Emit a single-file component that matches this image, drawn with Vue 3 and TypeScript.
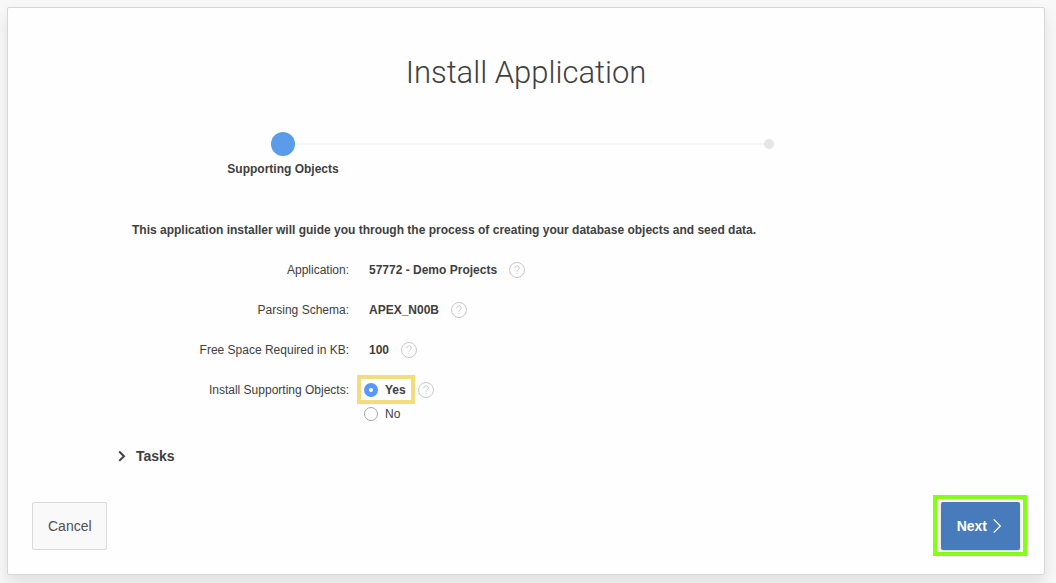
<script setup lang="ts">
import { ref } from 'vue'

interface Detail {
  label: string
  value: string
}

const details: Detail[] = [
  { label: 'Application:', value: '57772 - Demo Projects' },
  { label: 'Parsing Schema:', value: 'APEX_N00B' },
  { label: 'Free Space Required in KB:', value: '100' },
]

const install = ref<'yes' | 'no'>('yes')
const tasksOpen = ref(false)
</script>

<template>
  <main class="wizard">
    <h1 class="title">Install Application</h1>

    <ol class="steps">
      <li class="step current" aria-current="step">
        <span class="marker"><span class="dot"></span></span>
        <span class="step-label">Supporting Objects</span>
      </li>
      <li class="step">
        <span class="marker"><span class="dot"></span></span>
      </li>
    </ol>

    <form class="form" @submit.prevent>
      <p class="intro">
        This application installer will guide you through the process of creating your database objects and seed data.
      </p>

      <div v-for="item in details" :key="item.label" class="row">
        <span class="label">{{ item.label }}</span>
        <div class="field">
          <strong class="value">{{ item.value }}</strong>
          <button type="button" class="help" :aria-label="'Help: ' + item.label">
            <svg viewBox="0 0 16 16" width="16" height="16" aria-hidden="true">
              <circle cx="8" cy="8" r="7.5" />
              <path d="M5.700 6.200c0-1.400 1-2.300 2.300-2.300s2.300.9 2.300 2.100c0 1.600-2.300 1.800-2.300 3.700" />
              <path d="M8 11v1.200" />
            </svg>
          </button>
        </div>
      </div>

      <div class="row options" role="radiogroup" aria-labelledby="install-label">
        <span id="install-label" class="label">Install Supporting Objects:</span>
        <div class="choices">
          <div class="choice">
            <label class="radio highlight" :class="{ chosen: install === 'yes' }">
              <input v-model="install" type="radio" name="install" value="yes" />
              <span>Yes</span>
            </label>
            <button type="button" class="help" aria-label="Help: Install Supporting Objects">
              <svg viewBox="0 0 16 16" width="16" height="16" aria-hidden="true">
                <circle cx="8" cy="8" r="7.5" />
                <path d="M5.700 6.200c0-1.400 1-2.300 2.300-2.300s2.300.9 2.300 2.100c0 1.600-2.300 1.800-2.300 3.700" />
                <path d="M8 11v1.200" />
              </svg>
            </button>
          </div>
          <div class="choice">
            <label class="radio" :class="{ chosen: install === 'no' }">
              <input v-model="install" type="radio" name="install" value="no" />
              <span>No</span>
            </label>
          </div>
        </div>
      </div>

      <button type="button" class="tasks" :aria-expanded="tasksOpen" @click="tasksOpen = !tasksOpen">
        <svg viewBox="0 0 8 12" width="8" height="12" aria-hidden="true">
          <path d="M1.200 1.500 6 6.200l-4.800 4.700" />
        </svg>
        <span>Tasks</span>
      </button>

      <footer class="actions">
        <button type="button" class="btn cancel">Cancel</button>
        <div class="next-frame">
          <button type="submit" class="btn next">
            <span>Next</span>
            <svg viewBox="0 0 8 14" width="8" height="14" aria-hidden="true">
              <path d="M.7.4 7.300 7 .7 13.600" />
            </svg>
          </button>
        </div>
      </footer>
    </form>
  </main>
</template>

<style>
html {
  background: #f8f8f8;
}
body {
  margin: 0;
}
#app {
  display: flow-root;
}
</style>

<style scoped>
* {
  box-sizing: border-box;
}
.wizard {
  margin: 7px 11px 8px 7px;
  padding: 45px 24px 18px;
  border: 1px solid #d6d6d6;
  border-radius: 2px;
  background: #fefefe;
  box-shadow: 0 8px 16px rgba(0, 0, 0, 0.1);
  color: #404040;
  font: 12px/20px "Liberation Sans", Arial, sans-serif;
}
button {
  font: inherit;
  cursor: pointer;
}
.title {
  margin: 0;
  color: #404040;
  font: 300 31px/40px Roboto, "Liberation Sans", sans-serif;
  text-align: center;
}
.steps {
  display: grid;
  grid-template-columns: 1fr 1fr;
  margin: 39px 8px 0;
  padding: 0;
  list-style: none;
}
.step {
  text-align: center;
  font-weight: 700;
}
.marker {
  display: flex;
  align-items: center;
  height: 24px;
}
.marker::before,
.marker::after {
  content: "";
  flex: 1;
  height: 2px;
}
.step:first-child .marker::after,
.step:last-child .marker::before {
  background: #f7f7f7;
}
.dot {
  width: 10px;
  height: 10px;
  border-radius: 50%;
  background: #e6e6e6;
}
.current .dot {
  width: 24px;
  height: 24px;
  background: #5a9bea;
}
.step-label {
  display: block;
  margin-top: 3px;
}
.form {
  display: flex;
  flex-direction: column;
}
.intro {
  margin: 41px 0 10px 100px;
  font-weight: 700;
}
.row {
  display: grid;
  grid-template-columns: 317px 1fr;
  align-items: center;
  column-gap: 20px;
  height: 40px;
}
.label {
  text-align: right;
}
.field,
.choice {
  display: flex;
  align-items: center;
}
.value {
  margin-right: 12px;
}
.help {
  display: flex;
  padding: 0;
  border: 0;
  background: none;
}
.help svg {
  fill: none;
  stroke: #c8c8c8;
  stroke-width: 1;
}
.options {
  column-gap: 8px;
  align-items: start;
  height: auto;
  margin-top: 5px;
}
.options > .label {
  padding-top: 5px;
}
.choice {
  gap: 3px;
}
.radio {
  display: flex;
  align-items: center;
  gap: 7px;
  padding: 0 7px;
  cursor: pointer;
}
.highlight {
  height: 29px;
  padding: 0 5px 0 3px;
  border: 4px solid #f5dc7b;
}
.chosen {
  font-weight: 700;
}
.radio input {
  appearance: none;
  width: 14px;
  height: 14px;
  margin: 0;
  border: 1px solid #a6a6a6;
  border-radius: 50%;
  background: #ffffff;
}
.radio input:checked {
  border: 5px solid #5a97fb;
}
.tasks {
  display: flex;
  align-items: center;
  align-self: flex-start;
  gap: 10px;
  margin: 22px 0 0 86px;
  padding: 0;
  border: 0;
  background: none;
  color: #404040;
  font-size: 14px;
  font-weight: 700;
}
.tasks svg {
  fill: none;
  stroke: #404040;
  stroke-width: 2;
}
.actions {
  display: flex;
  align-items: center;
  justify-content: space-between;
  margin-top: 29px;
  margin-right: -7px;
}
.btn {
  height: 48px;
  border-radius: 2px;
  font-size: 14px;
}
.cancel {
  padding: 0 14px 0 15px;
  border: 1px solid #dadada;
  background: #f9f9f9;
  color: #505050;
}
.next-frame {
  padding: 3px 3px 2px 4px;
  border: 4px solid #84ff13;
}
.next {
  display: flex;
  align-items: center;
  gap: 6px;
  padding: 0 19px 0 16px;
  border: 0;
  background: #477bbc;
  box-shadow: 0 1px 3px rgba(0, 0, 0, 0.2);
  color: #ffffff;
  font-weight: 700;
}
.next svg {
  fill: none;
  stroke: #ffffff;
  stroke-width: 1.2;
}
</style>
